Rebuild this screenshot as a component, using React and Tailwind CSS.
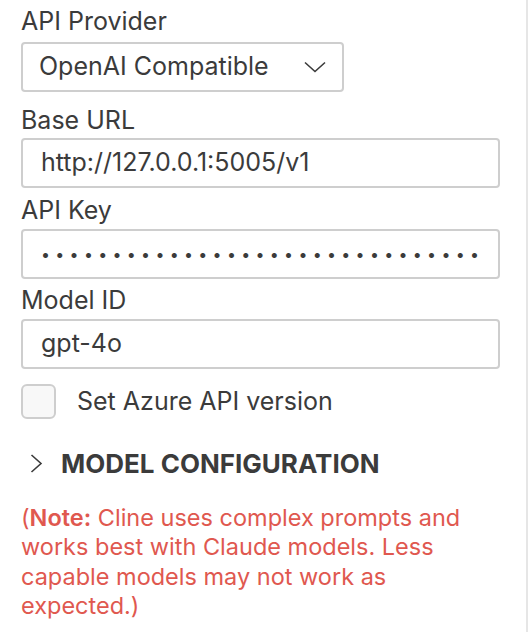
import React from 'react';

const font = { fontFamily: 'Inter, "Noto Sans", sans-serif' };

const Label = ({ children, className = '' }) => (
    <div className={`text-[25px] leading-[26px] text-[#3b3b3b] ${className}`}>{children}</div>
);

const TextBox = ({ children }) => (
    <div className="h-[50px] w-[479px] border-2 border-[#cecece] rounded-[4px] flex items-center pl-[18px] pr-[14px] overflow-hidden bg-white">
        {children}
    </div>
);

const App = () => {
    const dots = '•'.repeat(60);

    return (
        <div className="w-[528px] h-[632px] bg-white flex overflow-hidden" style={font}>
            <div className="w-[526px] pl-[21px] flex flex-col">
                <Label className="mt-[8px]">API Provider</Label>
                <div className="mt-[8px] h-[50px] w-[323px] border-2 border-[#cecece] rounded-[4px] flex items-center justify-between pl-[16px] pr-[16px]">
                    <span className="text-[25px] text-[#3b3b3b]">OpenAI Compatible</span>
                    <svg width="22" height="12" viewBox="0 0 22 12" fill="none">
                        <path d="M1 1.5 L11 10.5 L21 1.5" stroke="#3b3b3b" strokeWidth="1.6" />
                    </svg>
                </div>

                <Label className="mt-[15px]">Base URL</Label>
                <div className="mt-[5px]">
                    <TextBox>
                        <span className="text-[25px] text-[#3b3b3b] whitespace-nowrap">http://127.0.0.1:5005/v1</span>
                    </TextBox>
                </div>

                <Label className="mt-[9px]">API Key</Label>
                <div className="mt-[6px]">
                    <TextBox>
                        <div className="w-[443px] min-w-0 shrink-0 overflow-hidden whitespace-nowrap text-[16px] tracking-[5.3px] text-[#3b3b3b]">{dots}</div>
                    </TextBox>
                </div>

                <Label className="mt-[8px]">Model ID</Label>
                <div className="mt-[6px]">
                    <TextBox>
                        <span className="text-[25px] text-[#3b3b3b]">gpt-4o</span>
                    </TextBox>
                </div>

                <div className="mt-[14px] flex items-center gap-[21px]">
                    <div className="w-[35px] h-[35px] border-2 border-[#cecece] rounded-[6px] bg-[#f8f8f8]" />
                    <span className="text-[25px] text-[#3b3b3b]">Set Azure API version</span>
                </div>

                <div className="mt-[28px] flex items-center pl-[9px] gap-[18px]">
                    <svg width="13" height="19" viewBox="0 0 13 19" fill="none">
                        <path d="M1.5 1 L11 9.5 L1.5 18" stroke="#3b3b3b" strokeWidth="1.6" />
                    </svg>
                    <span className="text-[26px] leading-[30px] font-bold text-[#3b3b3b]">MODEL CONFIGURATION</span>
                </div>

                <p className="mt-[24px] w-[470px] text-[23.5px] leading-[29.5px] text-[#e0584f]">
                    (<span className="font-semibold">Note:</span> Cline uses complex prompts and works best with Claude models. Less capable models may not work as expected.)
                </p>
            </div>
            <div className="w-[2px] h-full bg-[#e6e6e6]" />
        </div>
    );
};

export default App;
